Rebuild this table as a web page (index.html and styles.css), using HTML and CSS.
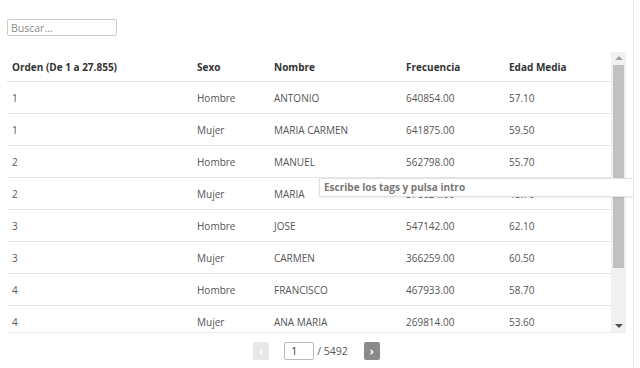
FILE: index.html
```html
<!DOCTYPE html>
<html lang="es">
<head>
<meta charset="utf-8">
<title>Nombres</title>
<link rel="stylesheet" href="styles.css">
</head>
<body>
<div class="page">
  <input class="search" type="text" placeholder="Buscar...">
  <div class="table-wrap">
    <div class="table-clip">
      <table class="data">
        <colgroup>
          <col class="c-orden"><col class="c-sexo"><col class="c-nombre"><col class="c-frec"><col>
        </colgroup>
        <thead>
          <tr><th>Orden (De 1 a 27.855)</th><th>Sexo</th><th>Nombre</th><th>Frecuencia</th><th>Edad Media</th></tr>
        </thead>
        <tbody>
          <tr><td>1</td><td>Hombre</td><td>ANTONIO</td><td>640854.00</td><td>57.10</td></tr>
          <tr><td>1</td><td>Mujer</td><td>MARIA CARMEN</td><td>641875.00</td><td>59.50</td></tr>
          <tr><td>2</td><td>Hombre</td><td>MANUEL</td><td>562798.00</td><td>55.70</td></tr>
          <tr><td>2</td><td>Mujer</td><td>MARIA</td><td>576024.00</td><td>48.70</td></tr>
          <tr><td>3</td><td>Hombre</td><td>JOSE</td><td>547142.00</td><td>62.10</td></tr>
          <tr><td>3</td><td>Mujer</td><td>CARMEN</td><td>366259.00</td><td>60.50</td></tr>
          <tr><td>4</td><td>Hombre</td><td>FRANCISCO</td><td>467933.00</td><td>58.70</td></tr>
          <tr><td>4</td><td>Mujer</td><td>ANA MARIA</td><td>269814.00</td><td>53.60</td></tr>
        </tbody>
      </table>
    </div>
    <div class="vscroll" aria-hidden="true">
      <div class="vs-arrow"><span class="tri-up"></span></div>
      <div class="vs-track"><div class="vs-thumb"></div></div>
      <div class="vs-arrow"><span class="tri-down"></span></div>
    </div>
  </div>
  <div class="pager">
    <button class="pg-btn pg-prev" type="button">&lsaquo;</button>
    <input class="pg-input" type="text" value="1">
    <span class="pg-total">/ 5492</span>
    <button class="pg-btn pg-next" type="button">&rsaquo;</button>
  </div>
  <div class="tip">Escribe los tags y pulsa intro</div>
</div>
</body>
</html>
```

FILE: styles.css
```css
html, body {
  margin: 0;
  padding: 0;
  background: #fff;
}
body {
  font-family: "Open Sans", "Noto Sans", sans-serif;
  font-size: 10px;
  color: #555;
}
.page {
  position: relative;
  width: 634px;
  height: 368px;
  box-sizing: border-box;
  border-right: 1px solid #ececec;
  padding: 19px 0 0 7px;
}
.search {
  display: block;
  box-sizing: border-box;
  width: 110px;
  height: 17px;
  margin: 0;
  padding: 0 3px;
  border: 1px solid #ccc;
  border-radius: 2px;
  font-family: "Open Sans", "Noto Sans", sans-serif;
  font-size: 10.5px;
  color: #555;
  outline: none;
}
.search::placeholder {
  color: #8a8a8a;
}
.table-wrap {
  margin-top: 16px;
  width: 619px;
  height: 280px;
  display: flex;
  border-bottom: 1px solid #ececec;
}
.table-clip {
  width: 604px;
  height: 280px;
  overflow: hidden;
}
.data {
  width: 604px;
  table-layout: fixed;
  border-collapse: collapse;
}
.c-orden { width: 185px; }
.c-sexo { width: 77px; }
.c-nombre { width: 132px; }
.c-frec { width: 103px; }
.data th {
  height: 29px;
  padding: 0 5px;
  text-align: left;
  font-weight: 700;
  color: #333;
  border-bottom: 1px solid #e3e3e3;
  white-space: nowrap;
}
.data td {
  height: 31px;
  padding: 0 5px;
  border-bottom: 1px solid #e6e6e6;
  white-space: nowrap;
}
.vscroll {
  width: 15px;
  height: 280px;
  background: #f1f1f1;
  display: flex;
  flex-direction: column;
}
.vs-arrow {
  height: 12px;
  display: flex;
  align-items: center;
  justify-content: center;
}
.tri-up {
  width: 0;
  height: 0;
  border-left: 4px solid transparent;
  border-right: 4px solid transparent;
  border-bottom: 4px solid #a3a3a3;
}
.tri-down {
  width: 0;
  height: 0;
  border-left: 4px solid transparent;
  border-right: 4px solid transparent;
  border-top: 4px solid #505050;
}
.vs-track {
  flex: 1;
  padding: 1px 2px 0 2px;
}
.vs-thumb {
  height: 203px;
  background: #c1c1c1;
}
.pager {
  width: 619px;
  margin-top: 9px;
  display: flex;
  justify-content: center;
  align-items: center;
  height: 18px;
}
.pg-btn {
  width: 16px;
  height: 18px;
  padding: 0;
  border: 0;
  border-radius: 2px;
  font-family: "Open Sans", sans-serif;
  font-size: 11px;
  line-height: 18px;
  font-weight: 700;
}
.pg-prev {
  background: #e8e8e8;
  color: #fff;
  margin-right: 15px;
}
.pg-next {
  background: #8a8a8a;
  color: #fff;
  margin-left: 16px;
}
.pg-input {
  box-sizing: border-box;
  width: 30px;
  height: 18px;
  margin: 0 3px 0 0;
  padding: 0 6px;
  border: 1px solid #bbb;
  border-radius: 2px;
  font-family: "Open Sans", sans-serif;
  font-size: 10.5px;
  color: #333;
}
.pg-total {
  color: #555;
  font-size: 10.5px;
}
.tip {
  position: absolute;
  left: 319px;
  top: 178px;
  width: 314px;
  height: 19px;
  box-sizing: border-box;
  background: #fff;
  border: 1px solid #e2e2e2;
  border-right: 0;
  box-shadow: 0 1px 2px rgba(0,0,0,0.08);
  padding: 0 0 0 4px;
  font-size: 10px;
  font-weight: 700;
  line-height: 17px;
  color: #777;
}
```
